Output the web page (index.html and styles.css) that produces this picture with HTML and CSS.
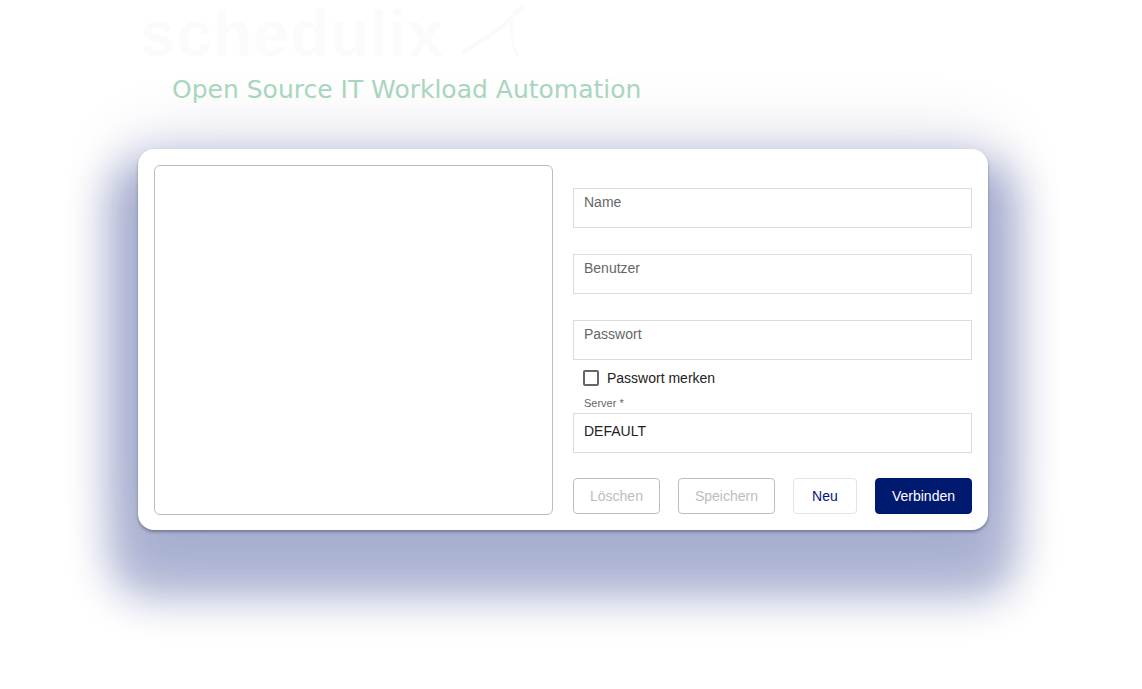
FILE: index.html
```html
<!DOCTYPE html>
<html lang="de">
<head>
    <meta charset="UTF-8">
    <meta name="viewport" content="width=device-width, initial-scale=1.0">
    <title>schedulix Login</title>
    <link rel="stylesheet" href="styles.css">
</head>
<body>

    <div class="page">
        <header class="brand">
            <div class="logo">
                <span class="logo-word">schedulix</span>
                <svg class="swoosh" width="70" height="60" viewBox="0 0 70 60">
                    <path d="M4 52 C 25 40, 45 30, 66 4" fill="none" stroke="#fafafa" stroke-width="4"/>
                    <path d="M58 10 C 50 25, 52 40, 60 56" fill="none" stroke="#fbfbfb" stroke-width="3"/>
                </svg>
            </div>
            <div class="tagline">Open Source IT Workload Automation</div>
        </header>

        <div class="card">
            <div class="profiles"></div>

            <form class="login" onsubmit="return false">
                <div class="field">
                    <input type="text" class="text-input" placeholder="Name">
                </div>
                <div class="field">
                    <input type="text" class="text-input" placeholder="Benutzer">
                </div>
                <div class="field">
                    <input type="password" class="text-input" placeholder="Passwort">
                </div>

                <label class="remember">
                    <span class="checkbox"></span>
                    Passwort merken
                </label>

                <div class="field field-server">
                    <span class="float-label">Server *</span>
                    <input type="text" class="text-input server-input" value="DEFAULT">
                </div>

                <div class="actions">
                    <button type="button" class="btn btn-disabled">Löschen</button>
                    <button type="button" class="btn btn-disabled">Speichern</button>
                    <button type="button" class="btn btn-outline">Neu</button>
                    <button type="submit" class="btn btn-primary">Verbinden</button>
                </div>
            </form>
        </div>
    </div>

</body>
</html>
```

FILE: styles.css
```css
* {
    box-sizing: border-box;
}

html, body {
    height: 100%;
}

body {
    margin: 0;
    background-color: #ffffff;
    font-family: "Liberation Sans", Arial, sans-serif;
    color: #222;
}

.page {
    width: 850px;
    margin-left: 138px;
    padding-bottom: 150px;
}

.brand {
    height: 149px;
}

.logo {
    display: flex;
    align-items: flex-end;
    height: 66px;
    padding-left: 2px;
}

.logo-word {
    font-family: "Liberation Sans", Arial, sans-serif;
    font-weight: 700;
    font-size: 64px;
    line-height: 64px;
    color: #fbfbfc;
    letter-spacing: 1px;
}

.swoosh {
    margin-left: 14px;
    margin-bottom: 6px;
}

.tagline {
    margin-left: 34px;
    margin-top: 9px;
    font-family: "DejaVu Sans", sans-serif;
    font-size: 25px;
    line-height: 30px;
    color: #a8d6bc;
}

.card {
    display: flex;
    gap: 20px;
    height: 381px;
    padding: 16px;
    background-color: #fff;
    border-radius: 16px;
    box-shadow: 0 2px 3px rgba(0, 0, 0, 0.3),
                0 40px 40px 30px rgba(0, 23, 119, 0.3),
                0 0 70px 10px rgba(0, 23, 119, 0.12);
}

.profiles {
    width: 399px;
    height: 350px;
    border: 1px solid #bdbdbd;
    border-radius: 6px;
}

.login {
    width: 399px;
    margin: 0;
    padding-top: 23px;
    display: flex;
    flex-direction: column;
}

.field {
    position: relative;
    margin-bottom: 26px;
}

.text-input {
    display: block;
    width: 100%;
    height: 40px;
    padding: 0 10px 12px;
    border: 1px solid #dcdcdc;
    border-radius: 0;
    font-family: "Liberation Sans", Arial, sans-serif;
    font-size: 14px;
    color: #222;
    outline: none;
}

.text-input::placeholder {
    color: #666;
}

.field:nth-child(3) {
    margin-bottom: 10px;
}

.remember {
    display: flex;
    align-items: center;
    gap: 8px;
    height: 16px;
    padding-left: 10px;
    font-size: 14px;
    color: #222;
}

.checkbox {
    width: 16px;
    height: 16px;
    border: 2px solid #666;
    border-radius: 2px;
}

.field-server {
    margin-top: 27px;
    margin-bottom: 0;
}

.server-input {
    padding-bottom: 5px;
}

.float-label {
    position: absolute;
    top: -16px;
    left: 7px;
    padding: 0 4px 3px;
    background-color: #fff;
    font-size: 11px;
    line-height: 13px;
    color: #666;
}

.actions {
    display: flex;
    justify-content: space-between;
    margin-top: 25px;
}

.btn {
    height: 36px;
    min-width: 64px;
    padding: 0 16px;
    border-radius: 4px;
    font-family: "Liberation Sans", Arial, sans-serif;
    font-size: 14px;
    background-color: #fff;
    cursor: pointer;
}

.btn-disabled {
    border: 1px solid #bdbdbd;
    color: #bdbdbd;
}

.btn-outline {
    border: 1px solid #e3e3e3;
    color: #001777;
}

.btn-primary {
    border: 1px solid #001a70;
    background-color: #001a70;
    color: #fff;
}
```
